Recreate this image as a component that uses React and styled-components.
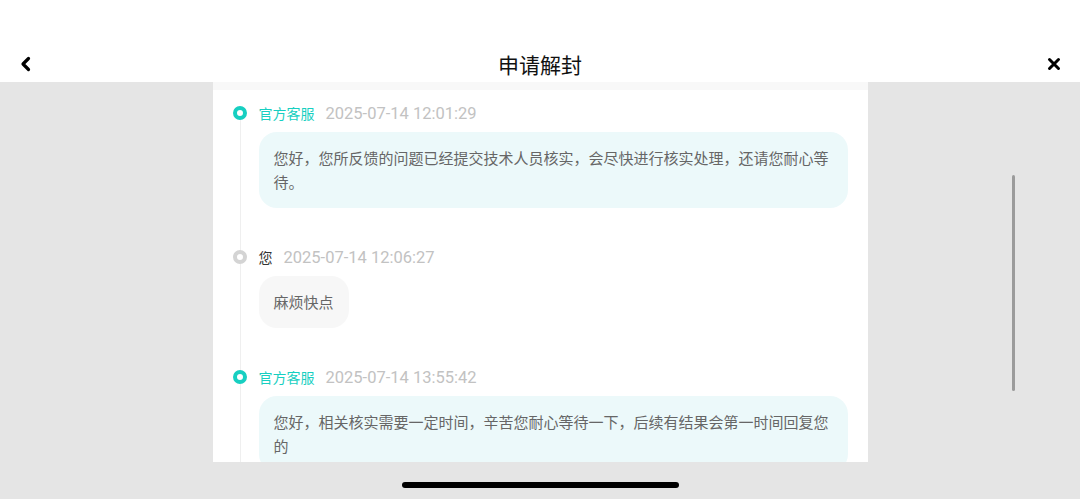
import React from 'react';
import styled, { createGlobalStyle } from 'styled-components';

const GlobalStyle = createGlobalStyle`
  html, body {
    margin: 0;
    padding: 0;
    background: #e5e5e5;
  }
  body {
    font-family: "Noto Sans CJK SC", "Noto Sans", sans-serif;
  }
`;

const Page = styled.div`
  position: relative;
  width: 1080px;
  height: 499px;
  display: flex;
  flex-direction: column;
  overflow: hidden;
  background: #e5e5e5;
`;

const Header = styled.header`
  height: 82px;
  background: #fff;
  display: flex;
  align-items: flex-end;
  flex-shrink: 0;
`;

const HeaderRow = styled.div`
  height: 36px;
  width: 100%;
  padding: 0 18px;
  box-sizing: border-box;
  display: flex;
  align-items: center;
  justify-content: space-between;
`;

const IconButton = styled.button`
  width: 16px;
  height: 16px;
  padding: 0;
  border: none;
  background: none;
  display: flex;
  align-items: center;
  justify-content: center;
`;

const Title = styled.h1`
  margin: 0;
  font-size: 21px;
  font-weight: 400;
  color: #111;
`;

const Body = styled.main`
  flex: 1;
  display: flex;
  justify-content: center;
  padding-bottom: 37px;
  min-height: 0;
`;

const Panel = styled.section`
  width: 655px;
  background: #fff;
  overflow: hidden;
  display: flex;
  flex-direction: column;
`;

const TopStrip = styled.div`
  height: 8px;
  background: #f8f8f8;
  flex-shrink: 0;
`;

const Timeline = styled.div`
  padding: 12px 20px 0 20px;
`;

const Item = styled.div`
  position: relative;
  padding-left: 26px;
  padding-bottom: 38px;

  &::before {
    content: '';
    position: absolute;
    left: 7px;
    top: 18px;
    bottom: -14px;
    width: 1px;
    background: #efefef;
  }
`;

const Dot = styled.span`
  position: absolute;
  left: 0;
  top: 4px;
  width: 14px;
  height: 14px;
  border-radius: 50%;
  box-sizing: border-box;
  background: #fff;
  border: 4.5px solid ${p => (p.$staff ? '#17cfc1' : '#d4d4d4')};
  z-index: 1;
`;

const Meta = styled.div`
  height: 22px;
  display: flex;
  align-items: center;
  gap: 11px;
`;

const Name = styled.span`
  font-size: 14px;
  color: ${p => (p.$staff ? '#17cfc1' : '#333')};
`;

const Time = styled.span`
  font-family: Roboto, "Liberation Sans", sans-serif;
  font-size: 16.5px;
  color: #c2c2c2;
`;

const Bubble = styled.div`
  display: ${p => (p.$staff ? 'block' : 'inline-block')};
  margin-top: 8px;
  padding: 14px 15px;
  border-radius: 18px;
  background: ${p => (p.$staff ? '#ecf9fa' : '#f7f7f7')};
  font-size: 15px;
  line-height: 24px;
  color: #666;
`;

const ScrollThumb = styled.div`
  position: absolute;
  left: 1012px;
  top: 175px;
  width: 3px;
  height: 216px;
  border-radius: 2px;
  background: #9b9b9b;
`;

const HomeIndicator = styled.div`
  position: absolute;
  left: 402px;
  top: 482px;
  width: 277px;
  height: 6px;
  border-radius: 3px;
  background: #000;
`;

const messages = [
  {
    staff: true,
    name: '官方客服',
    time: '2025-07-14 12:01:29',
    text: '您好，您所反馈的问题已经提交技术人员核实，会尽快进行核实处理，还请您耐心等待。',
  },
  { staff: false, name: '您', time: '2025-07-14 12:06:27', text: '麻烦快点' },
  {
    staff: true,
    name: '官方客服',
    time: '2025-07-14 13:55:42',
    text: '您好，相关核实需要一定时间，辛苦您耐心等待一下，后续有结果会第一时间回复您的',
  },
];

const BackIcon = () => (
  <svg width="12" height="16" viewBox="0 0 12 16">
    <path d="M8.5 2.5 L3 8 L8.5 13.5" fill="none" stroke="#000" strokeWidth="3.2" strokeLinecap="round" strokeLinejoin="round" />
  </svg>
);

const CloseIcon = () => (
  <svg width="14" height="14" viewBox="0 0 14 14">
    <path d="M2.5 2.5 L11.5 11.5 M11.5 2.5 L2.5 11.5" fill="none" stroke="#000" strokeWidth="3" strokeLinecap="round" />
  </svg>
);

export default function App() {
  return (
    <Page>
      <GlobalStyle />
      <Header>
        <HeaderRow>
          <IconButton><BackIcon /></IconButton>
          <Title>申请解封</Title>
          <IconButton><CloseIcon /></IconButton>
        </HeaderRow>
      </Header>
      <Body>
        <Panel>
          <TopStrip />
          <Timeline>
            {messages.map((m, i) => (
              <Item key={i}>
                <Dot $staff={m.staff} />
                <Meta>
                  <Name $staff={m.staff}>{m.name}</Name>
                  <Time>{m.time}</Time>
                </Meta>
                <Bubble $staff={m.staff}>{m.text}</Bubble>
              </Item>
            ))}
          </Timeline>
        </Panel>
      </Body>
      <ScrollThumb />
      <HomeIndicator />
    </Page>
  );
}
